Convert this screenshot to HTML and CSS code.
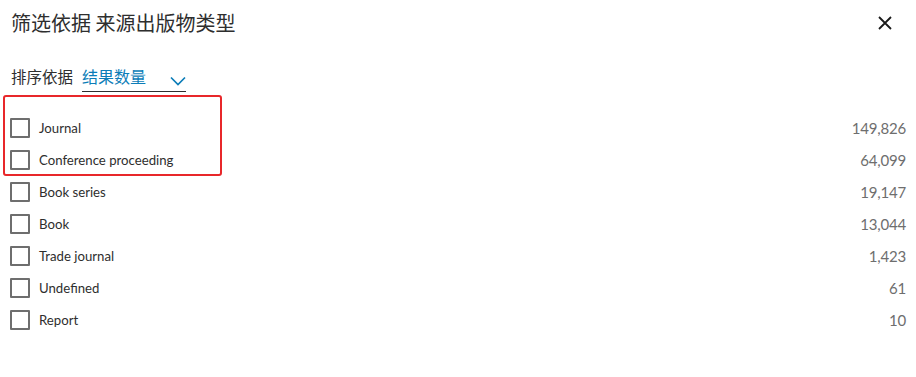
FILE: index.html
```html
<!DOCTYPE html>
<html lang="zh">
<head>
<meta charset="utf-8">
<link rel="stylesheet" href="styles.css">
</head>
<body>
<div class="panel">
  <header class="head">
    <h1 class="title">筛选依据 来源出版物类型</h1>
    <button class="close" aria-label="close">
      <svg width="14" height="14" viewBox="0 0 14 14"><path d="M1 1L13 13M13 1L1 13" stroke="#1a1a1a" stroke-width="1.8" fill="none"/></svg>
    </button>
  </header>
  <div class="sort">
    <span class="sort-label">排序依据</span>
    <span class="select">
      <span class="select-text">结果数量</span>
      <svg class="chev" width="16" height="10" viewBox="0 0 16 10"><path d="M1 1.5L8 8.5L15 1.5" stroke="#0c7db8" stroke-width="1.7" fill="none"/></svg>
    </span>
  </div>
  <ul class="list">
    <li class="row"><span class="box"></span><span class="name">Journal</span><span class="count">149,826</span></li>
    <li class="row"><span class="box"></span><span class="name">Conference proceeding</span><span class="count">64,099</span></li>
    <li class="row"><span class="box"></span><span class="name">Book series</span><span class="count">19,147</span></li>
    <li class="row"><span class="box"></span><span class="name">Book</span><span class="count">13,044</span></li>
    <li class="row"><span class="box"></span><span class="name">Trade journal</span><span class="count">1,423</span></li>
    <li class="row"><span class="box"></span><span class="name">Undefined</span><span class="count">61</span></li>
    <li class="row"><span class="box"></span><span class="name">Report</span><span class="count">10</span></li>
  </ul>
  <div class="highlight"></div>
</div>
</body>
</html>
```
FILE: styles.css
```css
html, body {
  margin: 0;
  padding: 0;
  background: #fff;
}
body {
  font-family: "Lato", "Noto Sans CJK SC", sans-serif;
  color: #2e2e2e;
}
.panel {
  position: relative;
  width: 916px;
  height: 377px;
  box-sizing: border-box;
  padding: 0 10px 0 10px;
}
.head {
  display: flex;
  align-items: center;
  justify-content: space-between;
  height: 46px;
  padding-left: 1px;
}
.title {
  margin: 0;
  font-family: "Noto Sans CJK SC", sans-serif;
  font-weight: 400;
  font-size: 20px;
  line-height: 28px;
  color: #2e2e2e;
}
.close {
  border: 0;
  background: none;
  padding: 0;
  width: 14px;
  height: 14px;
  margin-right: 14px;
  display: flex;
}
.sort {
  display: flex;
  align-items: flex-end;
  margin-top: 18px;
  padding-left: 1px;
  height: 28px;
  font-family: "Noto Sans CJK SC", sans-serif;
}
.sort-label {
  font-size: 15.5px;
  line-height: 22px;
  padding-bottom: 5.5px;
  color: #2e2e2e;
}
.select {
  display: flex;
  align-items: flex-end;
  margin-left: 9px;
  width: 104px;
  height: 28px;
  border-bottom: 1.5px solid #2e2e2e;
  justify-content: space-between;
  box-sizing: border-box;
}
.select-text {
  color: #0c7db8;
  font-size: 16px;
  line-height: 22px;
  padding-bottom: 4px;
}
.chev {
  margin-bottom: 5.5px;
}
.list {
  list-style: none;
  margin: 0;
  padding: 0;
  margin-top: 20px;
}
.row {
  display: flex;
  align-items: center;
  height: 32px;
  font-size: 13px;
}
.box {
  width: 20px;
  height: 20px;
  box-sizing: border-box;
  border: 2px solid #6e6e6e;
  border-radius: 1px;
  flex: none;
}
.name {
  margin-left: 9px;
  color: #2e2e2e;
  flex: 1;
  font-size: 13.2px;
}
.count {
  color: #6e6e6e;
  text-align: right;
  font-size: 15px;
  letter-spacing: -0.2px;
}
.highlight {
  position: absolute;
  left: 3px;
  top: 95px;
  width: 219px;
  height: 81px;
  box-sizing: border-box;
  border: 2px solid #e8272a;
  border-radius: 3px;
  pointer-events: none;
}
```
